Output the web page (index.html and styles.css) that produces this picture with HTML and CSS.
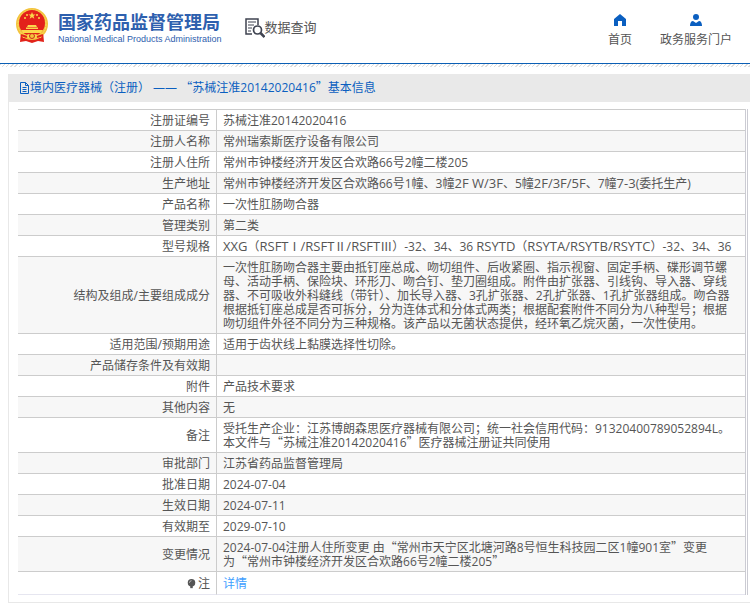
FILE: index.html
```
<!DOCTYPE html>
<html lang="zh-CN">
<head>
    <meta charset="UTF-8">
    <meta name="viewport" content="width=device-width, initial-scale=1.0">
    <title>国家药品监督管理局 数据查询</title>
    <link rel="stylesheet" href="styles.css">
</head>
<body>
    <!-- 页头 -->
    <header class="header">
        <div class="brand">
            <svg class="emblem" viewBox="0 0 32 36" aria-hidden="true">
                <path fill="#e2231a" d="M5 24h22l1 10-6-1-6 2-6-2-6 1z"/>
                <circle cx="16" cy="16" r="16" fill="#f3c33c"/>
                <circle cx="16" cy="16" r="14" fill="none" stroke="#fbdc6a" stroke-width="1" stroke-dasharray="2 1"/>
                <circle cx="16" cy="15" r="13" fill="#e3211b"/>
                <path fill="#fbd84b" d="M16 4l1 2.500h2.600l-2.100 1.600.8 2.600L16 9.200l-2.300 1.500.8-2.600-2.100-1.600H15z"/>
                <g fill="#fbd84b">
                    <circle cx="9" cy="10" r="1"/><circle cx="11" cy="7" r="1"/>
                    <circle cx="21" cy="7" r="1"/><circle cx="23" cy="10" r="1"/>
                    <path d="M12 17h8l1 2H11zM10 19.500h12V21H10zM5 22h22l-2 3H7z"/>
                </g>
                <path fill="#fbd84b" d="M5 25l5 2 3-1h6l3 1 5-2-2 5-5-1-4 2-4-2-5 1z"/>
                <circle cx="16" cy="28" r="2.500" fill="#f3c33c" stroke="#d0281b"/>
                <path stroke="#e2231a" stroke-width="2" fill="none" d="M5 27l6 2M27 27l-6 2"/>
            </svg>
            <div class="brand-text">
                <h1 class="brand-name">国家药品监督管理局</h1>
                <p class="brand-en">National Medical Products Administration</p>
            </div>
        </div>
        <div class="search-title">
            <svg class="search-icon" viewBox="0 0 20 20" fill="none" stroke="#3f4350" aria-hidden="true">
                <path stroke-width="1.500" d="M13 7V1H1v15h6"/>
                <path d="M3 4h8M3 7h6M3 10h4M3 13h3"/>
                <circle cx="12.500" cy="12" r="4" stroke-width="1.700"/>
                <path stroke-width="2.500" d="M15.500 15l4 4"/>
            </svg>
            <span>数据查询</span>
        </div>
        <nav class="nav">
            <a href="#">
                <svg viewBox="0 0 12 12" fill="#0b5fc0" aria-hidden="true"><path d="M6 0l6 5v7H8V7H4v5H0V5z"/></svg>
                首页
            </a>
            <a href="#">
                <svg viewBox="0 0 12 12" fill="#0b5fc0" aria-hidden="true"><circle cx="6" cy="3" r="3"/><path d="M0 12c0-3 1-5 3-5l3 2 3-2c2 0 3 2 3 5z"/></svg>
                政务服务门户
            </a>
        </nav>
    </header>
    <div class="stripes"></div>

    <!-- 注册信息 -->
    <main class="panel">
        <h2 class="panel-title">
            <svg class="doc-icon" viewBox="0 0 11 12" fill="none" stroke="#0b5fc0" aria-hidden="true"><path d="M1.500.5h5l3 3v8h-8zM6.500.5v3h3M3.500 5.500h4M3.500 7.500h4M3.500 9.500h4"/></svg>
            <span>境内医疗器械（注册） —— <span class="cjk">“</span>苏械注准20142020416<span class="cjk">”</span>基本信息</span>
        </h2>
        <div class="table-wrap">
            <table class="info">
                <tr><th scope="row">注册证编号</th><td>苏械注准20142020416</td></tr>
                <tr><th scope="row">注册人名称</th><td>常州瑞索斯医疗设备有限公司</td></tr>
                <tr><th scope="row">注册人住所</th><td>常州市钟楼经济开发区合欢路66号2幢二楼205</td></tr>
                <tr><th scope="row">生产地址</th><td>常州市钟楼经济开发区合欢路66号1幢、3幢<span class="latin">2F W/3F</span>、5幢<span class="latin">2F/3F/5F</span>、7幢<span class="latin">7-3</span>(委托生产)</td></tr>
                <tr><th scope="row">产品名称</th><td>一次性肛肠吻合器</td></tr>
                <tr><th scope="row">管理类别</th><td>第二类</td></tr>
                <tr><th scope="row">型号规格</th><td><span class="latin">XXG</span>（<span class="latin">RSFT</span><span class="cjk">Ⅰ</span><span class="latin">/RSFT</span><span class="cjk">Ⅱ</span><span class="latin">/RSFT</span><span class="cjk">Ⅲ</span>）-32、34、36 <span class="latin">RSYTD</span>（<span class="latin">RSYTA/RSYTB/RSYTC</span>）-32、34、36</td></tr>
                <tr><th scope="row">结构及组成/主要组成成分</th><td>一次性肛肠吻合器主要由抵钉座总成、吻切组件、后收紧圈、指示视窗、固定手柄、碟形调节螺母、活动手柄、保险块、环形刀、吻合钉、垫刀圈组成。附件由扩张器、引线钩、导入器、穿线器、不可吸收外科缝线（带针）、加长导入器、3孔扩张器、2孔扩张器、1孔扩张器组成。吻合器根据抵钉座总成是否可拆分，分为连体式和分体式两类；根据配套附件不同分为八种型号；根据吻切组件外径不同分为三种规格。该产品以无菌状态提供，经环氧乙烷灭菌，一次性使用。</td></tr>
                <tr><th scope="row">适用范围/预期用途</th><td>适用于齿状线上黏膜选择性切除。</td></tr>
                <tr><th scope="row">产品储存条件及有效期</th><td></td></tr>
                <tr><th scope="row">附件</th><td>产品技术要求</td></tr>
                <tr><th scope="row">其他内容</th><td>无</td></tr>
                <tr><th scope="row">备注</th><td>受托生产企业：江苏博朗森思医疗器械有限公司；统一社会信用代码：91320400789052894L。<br>本文件与<span class="cjk">“</span>苏械注准20142020416<span class="cjk">”</span>医疗器械注册证共同使用</td></tr>
                <tr><th scope="row">审批部门</th><td>江苏省药品监督管理局</td></tr>
                <tr><th scope="row">批准日期</th><td>2024-07-04</td></tr>
                <tr><th scope="row">生效日期</th><td>2024-07-11</td></tr>
                <tr><th scope="row">有效期至</th><td>2029-07-10</td></tr>
                <tr><th scope="row">变更情况</th><td>2024-07-04注册人住所变更 由<span class="cjk">“</span>常州市天宁区北塘河路8号恒生科技园二区1幢901室<span class="cjk">”</span>变更<br>为<span class="cjk">“</span>常州市钟楼经济开发区合欢路66号2幢二楼205<span class="cjk">”</span></td></tr>
                <tr class="note">
                    <th scope="row"><svg class="bulb" viewBox="0 0 9 12" aria-hidden="true"><circle cx="4.500" cy="4.500" r="4.500" fill="#555"/><path fill="#555" d="M3 8h3v3H3z"/><path d="M2 4.500Q2.500 2 4.500 2" fill="none" stroke="#ccc"/></svg>注</th>
                    <td><a href="#">详情</a></td>
                </tr>
            </table>
        </div>
    </main>
</body>
</html>
```
FILE: styles.css
```
* {
    box-sizing: border-box;
}
body {
    margin: 0;
    font-family: "Open Sans", "Noto Sans CJK SC", sans-serif;
    font-size: 12px;
    line-height: 14px;
    color: #555;
    background-color: #fff;
}
h1, h2, p {
    margin: 0;
}
a {
    text-decoration: none;
}
.cjk {
    font-family: "Noto Sans CJK SC", sans-serif;
    line-height: 10px;
}
.latin {
    font-size: 13px;
    line-height: 10px;
}

/* header */
.header {
    display: flex;
    align-items: flex-start;
    padding: 8px 18px 0 16px;
    height: 64px;
    border-bottom: 1px solid #0b5fb5;
}
.brand {
    display: flex;
    gap: 10px;
}
.emblem {
    width: 32px;
    height: 36px;
}
.brand-text {
    padding-top: 4px;
}
.brand-name {
    font-size: 18px;
    line-height: 20px;
    color: #2e60ae;
}
.brand-en {
    font-family: "Liberation Sans", Arial, sans-serif;
    font-size: 9px;
    line-height: 14px;
    color: #2e60ae;
    white-space: nowrap;
}
.search-title {
    display: flex;
    margin-left: 23px;
    padding-top: 10px;
    font-size: 13px;
    line-height: 18px;
}
.search-icon {
    width: 20px;
    height: 20px;
}
.nav {
    display: flex;
    gap: 28px;
    margin-left: auto;
    padding-top: 6px;
}
.nav a {
    display: flex;
    flex-direction: column;
    align-items: center;
    gap: 7px;
    color: #555;
}
.nav svg {
    width: 12px;
    height: 12px;
}
.stripes {
    height: 3px;
    background: repeating-linear-gradient(135deg, #ddd 0, #ddd 1px, #fff 1px, #fff 3px);
}

/* panel */
.panel {
    margin: 7px 0 0 8px;
    padding-bottom: 7px;
    border-left: 1px solid #e8e8e8;
    border-bottom: 1px solid #e8e8e8;
}
.panel-title {
    display: flex;
    align-items: center;
    height: 28px;
    padding-left: 10px;
    font-size: 12px;
    font-weight: normal;
    color: #0b5fc0;
    background-color: #e9e9e9;
}
.doc-icon {
    width: 11px;
    height: 12px;
}
.table-wrap {
    margin: 7px 2px 0 9px;
    padding-right: 1px;
    border-right: 1px solid #cbcbd3;
}
.info {
    width: 100%;
    border-collapse: separate;
    border-spacing: 0;
    border-top: 1px solid #ccc;
    border-right: 1px solid #cbcbd3;
}
.info th, .info td {
    height: 21px;
    padding: 4px 6px 2px;
    border-bottom: 1px solid #ccc;
    font-weight: normal;
}
.info td {
    padding-right: 8px;
}
.info th {
    width: 199px;
    text-align: right;
    border-right: 1px solid #ccc;
}
.info tr:nth-child(even) {
    background-color: #f7f7f7;
}
.info .note th, .info .note td {
    height: 23px;
    border-bottom-color: #e6e6f0;
}
.note a {
    color: #409eff;
}
.bulb {
    width: 9px;
    height: 10px;
    margin-right: 2px;
    vertical-align: -1px;
}
```
